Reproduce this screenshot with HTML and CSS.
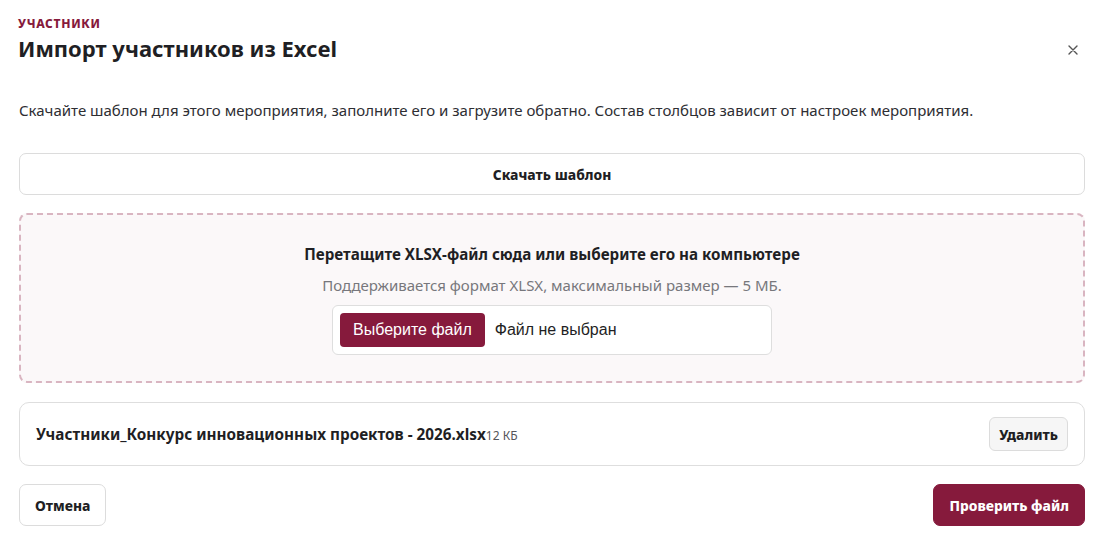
FILE: index.html
```html
<!DOCTYPE html>
<html lang="ru">
<head>
<meta charset="utf-8">
<link rel="stylesheet" href="styles.css">
</head>
<body>
<div class="modal">
  <header class="head">
    <div class="titles">
      <div class="eyebrow">УЧАСТНИКИ</div>
      <h1 class="title">Импорт участников из Excel</h1>
    </div>
    <button class="close" aria-label="Закрыть">
      <svg width="10" height="10" viewBox="0 0 10 10"><path d="M1 1L9 9M9 1L1 9" stroke="#555" stroke-width="1.4" stroke-linecap="round"/></svg>
    </button>
  </header>
  <p class="desc">Скачайте шаблон для этого мероприятия, заполните его и загрузите обратно. Состав столбцов зависит от настроек мероприятия.</p>
  <button class="btn btn-wide">Скачать шаблон</button>
  <div class="drop">
    <div class="drop-title">Перетащите XLSX-файл сюда или выберите его на компьютере</div>
    <div class="drop-sub">Поддерживается формат XLSX, максимальный размер — 5 МБ.</div>
    <div class="file-input">
      <span class="choose">Выберите файл</span>
      <span class="none">Файл не выбран</span>
    </div>
  </div>
  <div class="file-row">
    <div class="file-name">Участники_Конкурс инновационных проектов - 2026.xlsx<span class="size">12 КБ</span></div>
    <button class="btn btn-small">Удалить</button>
  </div>
  <footer class="foot">
    <button class="btn">Отмена</button>
    <button class="btn btn-primary">Проверить файл</button>
  </footer>
</div>
</body>
</html>
```
FILE: styles.css
```css
* { box-sizing: border-box; }
html, body { margin: 0; background: #fff; }
body {
  font-family: "Noto Sans", "Open Sans", sans-serif;
  color: #1f1f24;
}
.modal {
  padding: 15px 15px 16px 19px;
  display: flex;
  flex-direction: column;
}
.head {
  display: flex;
  justify-content: space-between;
  align-items: flex-start;
}
.eyebrow {
  font-size: 12px;
  font-weight: 800;
  letter-spacing: 0.7px;
  color: #861a3c;
  line-height: 18px;
  margin-left: -1px;
}
.title {
  margin: 0 0 0 -1px;
  font-size: 22px;
  font-weight: 700;
  line-height: 30px;
  color: #1f1f24;
}
.close {
  border: 0;
  background: none;
  padding: 0;
  margin-top: 27px;
  margin-right: 4px;
  width: 16px;
  height: 16px;
  display: flex;
  align-items: center;
  justify-content: center;
}
.desc {
  margin: 37px 0 33px;
  font-size: 15px;
  line-height: 20px;
  color: #2e2e33;
}
.btn {
  font-family: inherit;
  font-size: 13.8px;
  font-weight: 800;
  color: #1f1f24;
  background: #fff;
  border: 1px solid #dcdcdc;
  border-radius: 7px;
  height: 42px;
  padding: 0 15px;
  cursor: pointer;
}
.btn-wide { width: 100%; }
.drop {
  margin-top: 18px;
  border: 2px dashed #d9b5c1;
  border-radius: 8px;
  background: #fbf8f9;
  height: 170px;
  display: flex;
  flex-direction: column;
  align-items: center;
  padding-top: 29px;
}
.drop-title {
  font-size: 15.2px;
  font-weight: 700;
  line-height: 20px;
  color: #1f1f24;
}
.drop-sub {
  margin-top: 11px;
  font-size: 15px;
  line-height: 20px;
  color: #77777c;
}
.file-input {
  margin-top: 10px;
  width: 440px;
  height: 50px;
  background: #fff;
  border: 1px solid #dedede;
  border-radius: 6px;
  display: flex;
  align-items: center;
  padding-left: 7px;
  gap: 10px;
}
.choose {
  background: #861a3c;
  color: #fff;
  font-family: "Liberation Sans", Arial, sans-serif;
  font-size: 16px;
  height: 34px;
  padding: 0 13px;
  border-radius: 4px;
  display: flex;
  align-items: center;
}
.none {
  font-family: "Liberation Sans", Arial, sans-serif;
  font-size: 16px;
  color: #1f1f24;
}
.file-row {
  margin-top: 19px;
  border: 1px solid #dedede;
  border-radius: 10px;
  height: 64px;
  display: flex;
  align-items: center;
  justify-content: space-between;
  padding: 0 16px 0 16px;
}
.file-name {
  font-size: 15.3px;
  font-weight: 700;
  color: #1f1f24;
}
.size {
  font-size: 12px;
  font-weight: 400;
  color: #55555a;
}
.btn-small {
  height: 34px;
  padding: 0 9px;
  background: #f6f6f6;
  border-radius: 6px;
}
.foot {
  margin-top: 18px;
  display: flex;
  justify-content: space-between;
}
.btn-primary {
  background: #861a3c;
  border-color: #861a3c;
  color: #fff;
}
```
